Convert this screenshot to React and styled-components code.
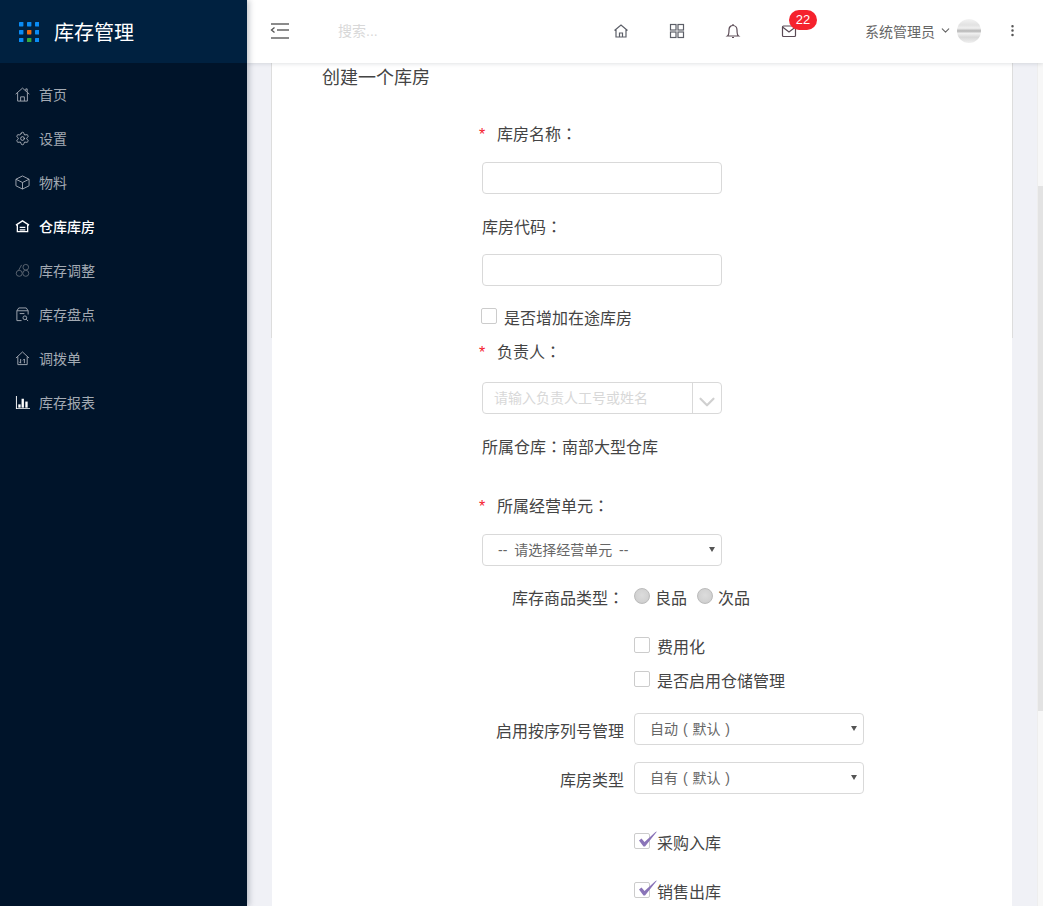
import React from 'react';
import styled, { createGlobalStyle } from 'styled-components';
import { ChevronDown, MoreVertical, Settings } from 'lucide-react';

const GlobalStyle = createGlobalStyle`
  html, body {
    margin: 0;
    height: 100%;
    overflow: hidden;
    background: #f0f1f6;
    font-family: "Liberation Sans", "Noto Sans CJK SC", sans-serif;
  }
  * { box-sizing: border-box; }
`;

const Shell = styled.div`
  display: flex;
  width: 1043px;
  height: 906px;
  overflow: hidden;
`;

const Sidebar = styled.aside`
  width: 247px;
  flex-shrink: 0;
  background: #00142a;
  position: relative;
  z-index: 3;
  box-shadow: 2px 0 6px rgba(0, 21, 41, 0.25);
`;

const Brand = styled.div`
  height: 63px;
  background: #002140;
  display: flex;
  align-items: center;
  padding-left: 19px;
  gap: 15px;
`;

const BrandName = styled.span`
  color: #fff;
  font-size: 20px;
`;

const Menu = styled.ul`
  list-style: none;
  margin: 0;
  padding: 10px 0 0;
`;

const MenuItem = styled.li`
  height: 44px;
  display: flex;
  align-items: center;
  padding-left: 15px;
  padding-bottom: 2px;
  gap: 9px;
  font-size: 14px;
  color: ${(p) => (p.$active ? '#fff' : '#a3aab3')};
  font-weight: ${(p) => (p.$active ? 500 : 400)};
  svg { flex-shrink: 0; }
`;

const Main = styled.div`
  flex: 1;
  min-width: 0;
  display: flex;
  flex-direction: column;
`;

const Topbar = styled.header`
  height: 63px;
  flex-shrink: 0;
  background: #fff;
  display: flex;
  align-items: center;
  position: relative;
  z-index: 2;
  box-shadow: 0 1px 4px rgba(0, 21, 41, 0.12);
  padding-left: 23px;
  padding-bottom: 2px;
`;

const SearchBox = styled.input`
  border: 0;
  outline: 0;
  width: 200px;
  margin-left: 47px;
  padding: 0 2px;
  font-size: 14px;
  font-family: inherit;
  &::placeholder { color: #d8d8d8; }
`;

const TopIcons = styled.div`
  margin-left: 77px;
  display: flex;
  gap: 40px;
`;

const TopIcon = styled.span`
  position: relative;
  width: 16px;
  height: 16px;
  display: block;
`;

const Badge = styled.span`
  position: absolute;
  left: 8px;
  top: -13px;
  width: 28px;
  height: 20px;
  border-radius: 10px;
  background: #f5222d;
  color: #fff;
  font-size: 13px;
  line-height: 20px;
  text-align: center;
`;

const UserName = styled.span`
  margin-left: 68px;
  display: flex;
  align-items: center;
  gap: 4px;
  font-size: 14px;
  color: #666;
`;

const Avatar = styled.span`
  width: 24px;
  height: 24px;
  border-radius: 50%;
  margin-left: 1px;
  flex-shrink: 0;
  background: linear-gradient(#f3f3f3, #e2e2e2 25%, #f0f0f0 38%, #b4b4b4 50%, #f0f0f0 60%, #d8d8d8 76%, #f0f0f0);
`;

const Kebab = styled.span`
  margin-left: 24px;
  display: flex;
  color: #555;
`;

const Content = styled.div`
  flex: 1;
  min-height: 0;
  display: flex;
  overflow: hidden;
`;

const Canvas = styled.main`
  flex: 1;
  padding-left: 25px;
  padding-right: 25px;
  min-width: 0;
`;

const Scrollbar = styled.div`
  width: 6px;
  flex-shrink: 0;
  background: #f7f7f7;
  border-left: 1px solid #eee;
`;

const Thumb = styled.div`
  margin-top: 123px;
  height: 525px;
  background: #e3e3e3;
`;

const Card = styled.section`
  position: relative;
  background: #fff;
  height: 100%;
  padding: 5px 0 0 50px;
  &::after {
    content: '';
    position: absolute;
    top: 0;
    left: -1px;
    right: -1px;
    height: 275px;
    border-left: 1px solid #ddd;
    border-right: 1px solid #ddd;
    pointer-events: none;
  }
`;

const Title = styled.h2`
  margin: 0;
  font-size: 18px;
  font-weight: 400;
  line-height: 20px;
  color: #444;
`;

const Form = styled.form`
  margin-left: 160px;
  font-size: 16px;
  line-height: 22px;
  color: #444;
`;

const Row = styled.div`
  margin-top: ${(p) => p.$mt}px;
`;

const Label = styled.div`
  position: relative;
  padding-left: ${(p) => (p.$required ? 15 : 0)}px;
  ${(p) =>
    p.$required &&
    `&::before {
      content: '*';
      position: absolute;
      left: -3px;
      top: 0;
      font-size: 16px;
      color: #f5222d;
    }`}
`;

/* fullwidth colon sits centred in the reference */
const Punct = styled.span`
  font-family: "Noto Sans CJK TC", sans-serif;
  line-height: 1;
`;

const TextInput = styled.input`
  display: block;
  width: 240px;
  height: 32px;
  border: 1px solid #d9d9d9;
  border-radius: 4px;
  background: #fff;
  outline: 0;
`;

const CheckLine = styled.label`
  display: flex;
  align-items: center;
  margin-left: ${(p) => p.$indent}px;
`;

const CheckBoxMark = styled.span`
  position: relative;
  width: 16px;
  height: 16px;
  flex-shrink: 0;
  margin-right: 7px;
  margin-top: -6px;
  border: 1px solid #ccc;
  border-radius: 2px;
  background: #fff;
  svg {
    position: absolute;
    left: 3px;
    top: -3px;
  }
`;

const Combo = styled.div`
  width: 240px;
  height: 32px;
  border: 1px solid #d9d9d9;
  border-radius: 4px;
  display: flex;
  color: #d8d8d8;
  font-size: 14px;
`;

const ComboText = styled.span`
  flex: 1;
  padding-left: 11px;
  line-height: 30px;
`;

const ComboArrow = styled.span`
  width: 29px;
  margin-top: -1px;
  border-left: 1px solid #d9d9d9;
  display: flex;
  align-items: center;
  justify-content: center;
  padding-top: 8px;
  color: #d0d0d0;
`;

const Select = styled.div`
  position: relative;
  flex-shrink: 0;
  width: ${(p) => p.$width}px;
  height: 32px;
  border: 1px solid #d9d9d9;
  border-radius: 4px;
  padding-left: 15px;
  font-size: 14px;
  line-height: 30px;
  color: #666;
  word-spacing: ${(p) => p.$wordGap || 0}px;
  &::after {
    content: '';
    position: absolute;
    right: 6px;
    top: 12px;
    border-left: 3px solid transparent;
    border-right: 3px solid transparent;
    border-top: 5px solid #555;
  }
`;

const SplitRow = styled.div`
  display: grid;
  grid-template-columns: 142px auto;
  column-gap: 10px;
  align-items: center;
  justify-content: start;
  margin-top: ${(p) => p.$mt}px;
`;

const SideLabel = styled.span`
  text-align: right;
  white-space: nowrap;
  margin-top: ${(p) => p.$drop || 0}px;
`;

const RadioGroup = styled.div`
  display: flex;
  align-items: center;
`;

const Radio = styled.span`
  width: 16px;
  height: 16px;
  border-radius: 50%;
  margin-right: 5px;
  margin-top: -6px;
  border: 1px solid #bbb;
  background: radial-gradient(circle at 50% 45%, #dcdcdc 0, #d2d2d2 60%, #c4c4c4 100%);
`;

const RadioText = styled.span`
  margin-right: 10px;
`;

const BrandDots = () => (
  <svg width="20" height="20" viewBox="0 0 20 20">
    {[0, 1, 2].flatMap((r) =>
      [0, 1, 2].map((c) => {
        let fill = '#0a8cf5';
        if (r === 1 && c === 1) fill = '#f06a0f';
        if (r === 2 && c === 1) fill = '#35a83c';
        return <rect key={`${r}-${c}`} x={c * 8} y={r * 8} width="4.4" height="4.4" rx="0.6" fill={fill} />;
      })
    )}
  </svg>
);

const ico = { width: 15, height: 15, viewBox: '0 0 16 16', fill: 'none', stroke: 'currentColor', strokeWidth: 1 };

const HomeIcon = () => (
  <svg {...ico}>
    <path d="M.7 7.600 8 1.200l7.300 6.400M2.800 6.400V15h10.400V6.400M6 15v-4.500h4V15M11.500 3.800V2h1.500v3.200" />
  </svg>
);
const BoxIcon = () => (
  <svg {...ico}>
    <path d="M8 1 15 4.500v7L8 15l-7-3.500v-7zM1 4.500 8 8l7-3.500M8 8v7" />
  </svg>
);
const WarehouseIcon = () => (
  <svg {...ico} strokeWidth={1.400}>
    <path d="M1 6.500 8 2l7 4.500M2.500 6.500V13.500h11V6.500M5 9h6M5 11.500h6" />
  </svg>
);
const AdjustIcon = () => (
  <svg {...ico} stroke="#5d6672">
    <circle cx="4.500" cy="11" r="3.200" />
    <circle cx="11.500" cy="11" r="3.200" />
    <circle cx="11.500" cy="4.500" r="3" />
    <path d="M4 7.500 7 2" />
  </svg>
);
const CountIcon = () => (
  <svg {...ico}>
    <path d="M7 14.500H2V4l2-3h8l2 3v4M2 4h12M5 7h5" />
    <circle cx="10.500" cy="11.500" r="2" />
    <path d="m12 13 2 2" />
  </svg>
);
const TransferIcon = () => (
  <svg {...ico}>
    <path d="M1 7.500 8 1l7 6.500M3 6v8.500h10V6M6 8.500v4.500M4.500 11.500 6 13M10 13V8.500M8.500 10 10 8.500" />
  </svg>
);
const ChartIcon = () => (
  <svg width="15" height="15" viewBox="0 0 16 16" fill="#fff">
    <path d="M1 1h1v13h14v1H1z" />
    <rect x="3.500" y="10" width="2.500" height="3.500" />
    <rect x="7" y="4" width="2.500" height="9.500" />
    <rect x="11" y="7" width="2.500" height="6.500" />
  </svg>
);

const CollapseIcon = () => (
  <svg width="19" height="16" viewBox="0 0 19 16" fill="none" stroke="#666" strokeWidth="1.300">
    <path d="M1 1h18M7 7h12M1 15h18" />
    <path d="M4.500 4.500 1.500 7l3 2.500" stroke="#555" />
  </svg>
);

const topIco = { width: 16, height: 16, viewBox: '0 0 16 16', fill: 'none', stroke: '#5c5f68', strokeWidth: 1.200 };

const CheckTick = () => (
  <svg width="20" height="18" viewBox="0 0 20 18">
    <path d="M1 9.500 3.500 7.500 6.500 11 17.500 1 19 .5 7 15.500H5.500z" fill="#8a74b8" />
  </svg>
);

const CheckItem = ({ checked, children }) => (
  <>
    <CheckBoxMark>{checked && <CheckTick />}</CheckBoxMark>
    <span>{children}</span>
  </>
);

const menuItems = [
  { label: '首页', icon: <HomeIcon /> },
  { label: '设置', icon: <Settings size={15} strokeWidth={1.300} color="#c4c8ce" /> },
  { label: '物料', icon: <BoxIcon /> },
  { label: '仓库库房', icon: <WarehouseIcon />, active: true },
  { label: '库存调整', icon: <AdjustIcon /> },
  { label: '库存盘点', icon: <CountIcon /> },
  { label: '调拨单', icon: <TransferIcon /> },
  { label: '库存报表', icon: <ChartIcon /> },
];

export default function App() {
  return (
    <Shell>
      <GlobalStyle />
      <Sidebar>
        <Brand>
          <BrandDots />
          <BrandName>库存管理</BrandName>
        </Brand>
        <Menu>
          {menuItems.map((item) => (
            <MenuItem key={item.label} $active={item.active}>
              {item.icon}
              {item.label}
            </MenuItem>
          ))}
        </Menu>
      </Sidebar>
      <Main>
        <Topbar>
          <CollapseIcon />
          <SearchBox placeholder="搜索..." />
          <TopIcons>
            <TopIcon>
              <svg {...topIco}>
                <path d="M1.500 7.500 8 2l6.500 5.500M3 6.500V14h10V6.500M6.500 14v-4h3v4" />
              </svg>
            </TopIcon>
            <TopIcon>
              <svg {...topIco}>
                <rect x="1.500" y="1.500" width="5.500" height="5.500" />
                <rect x="9" y="1.500" width="5.500" height="5.500" />
                <rect x="1.500" y="9" width="5.500" height="5.500" />
                <rect x="9" y="9" width="5.500" height="5.500" />
              </svg>
            </TopIcon>
            <TopIcon>
              <svg {...topIco} stroke="#5a4a55">
                <path d="M2.500 13h11c-1.500-1-1.500-3-1.500-6 0-2.500-1.500-4.500-4-4.500S4 4.500 4 7c0 3 0 5-1.500 6zM8 1v1.500M7 14.500h2" />
              </svg>
            </TopIcon>
            <TopIcon>
              <svg {...topIco} stroke="#5a4a55">
                <rect x="1.500" y="3" width="13" height="10.500" rx="1" />
                <path d="m1.500 4 6.500 5 6.500-5" />
              </svg>
              <Badge>22</Badge>
            </TopIcon>
          </TopIcons>
          <UserName>
            系统管理员
            <ChevronDown size={13} color="#666" />
            <Avatar />
          </UserName>
          <Kebab>
            <MoreVertical size={15} />
          </Kebab>
        </Topbar>
        <Content>
          <Canvas>
            <Card>
              <Title>创建一个库房</Title>
              <Form>
                <Row $mt={36}><Label $required>库房名称<Punct>：</Punct></Label></Row>
                <Row $mt={16}><TextInput /></Row>
                <Row $mt={23}><Label>库房代码<Punct>：</Punct></Label></Row>
                <Row $mt={15}><TextInput /></Row>
                <Row $mt={22}><CheckLine $indent={-1}><CheckItem>是否增加在途库房</CheckItem></CheckLine></Row>
                <Row $mt={12}><Label $required>负责人<Punct>：</Punct></Label></Row>
                <Row $mt={18}>
                  <Combo>
                    <ComboText>请输入负责人工号或姓名</ComboText>
                    <ComboArrow><ChevronDown size={26} strokeWidth={2} /></ComboArrow>
                  </Combo>
                </Row>
                <Row $mt={23}><Label>所属仓库<Punct>：</Punct>南部大型仓库</Label></Row>
                <Row $mt={37}><Label $required>所属经营单元<Punct>：</Punct></Label></Row>
                <Row $mt={16}><Select $width={240} $wordGap={3}>-- 请选择经营单元 --</Select></Row>
                <SplitRow $mt={22}>
                  <SideLabel>库存商品类型<Punct>：</Punct></SideLabel>
                  <RadioGroup>
                    <Radio />
                    <RadioText>良品</RadioText>
                    <Radio />
                    <RadioText>次品</RadioText>
                  </RadioGroup>
                </SplitRow>
                <Row $mt={27}><CheckLine $indent={152}><CheckItem>费用化</CheckItem></CheckLine></Row>
                <Row $mt={12}><CheckLine $indent={152}><CheckItem>是否启用仓储管理</CheckItem></CheckLine></Row>
                <SplitRow $mt={20}>
                  <SideLabel $drop={6}>启用按序列号管理</SideLabel>
                  <Select $width={230} $wordGap={1}>自动 ( 默认 )</Select>
                </SplitRow>
                <SplitRow $mt={17}>
                  <SideLabel $drop={6}>库房类型</SideLabel>
                  <Select $width={230} $wordGap={1}>自有 ( 默认 )</Select>
                </SplitRow>
                <Row $mt={39}><CheckLine $indent={152}><CheckItem checked>采购入库</CheckItem></CheckLine></Row>
                <Row $mt={27}><CheckLine $indent={152}><CheckItem checked>销售出库</CheckItem></CheckLine></Row>
              </Form>
            </Card>
          </Canvas>
          <Scrollbar>
            <Thumb />
          </Scrollbar>
        </Content>
      </Main>
    </Shell>
  );
}
